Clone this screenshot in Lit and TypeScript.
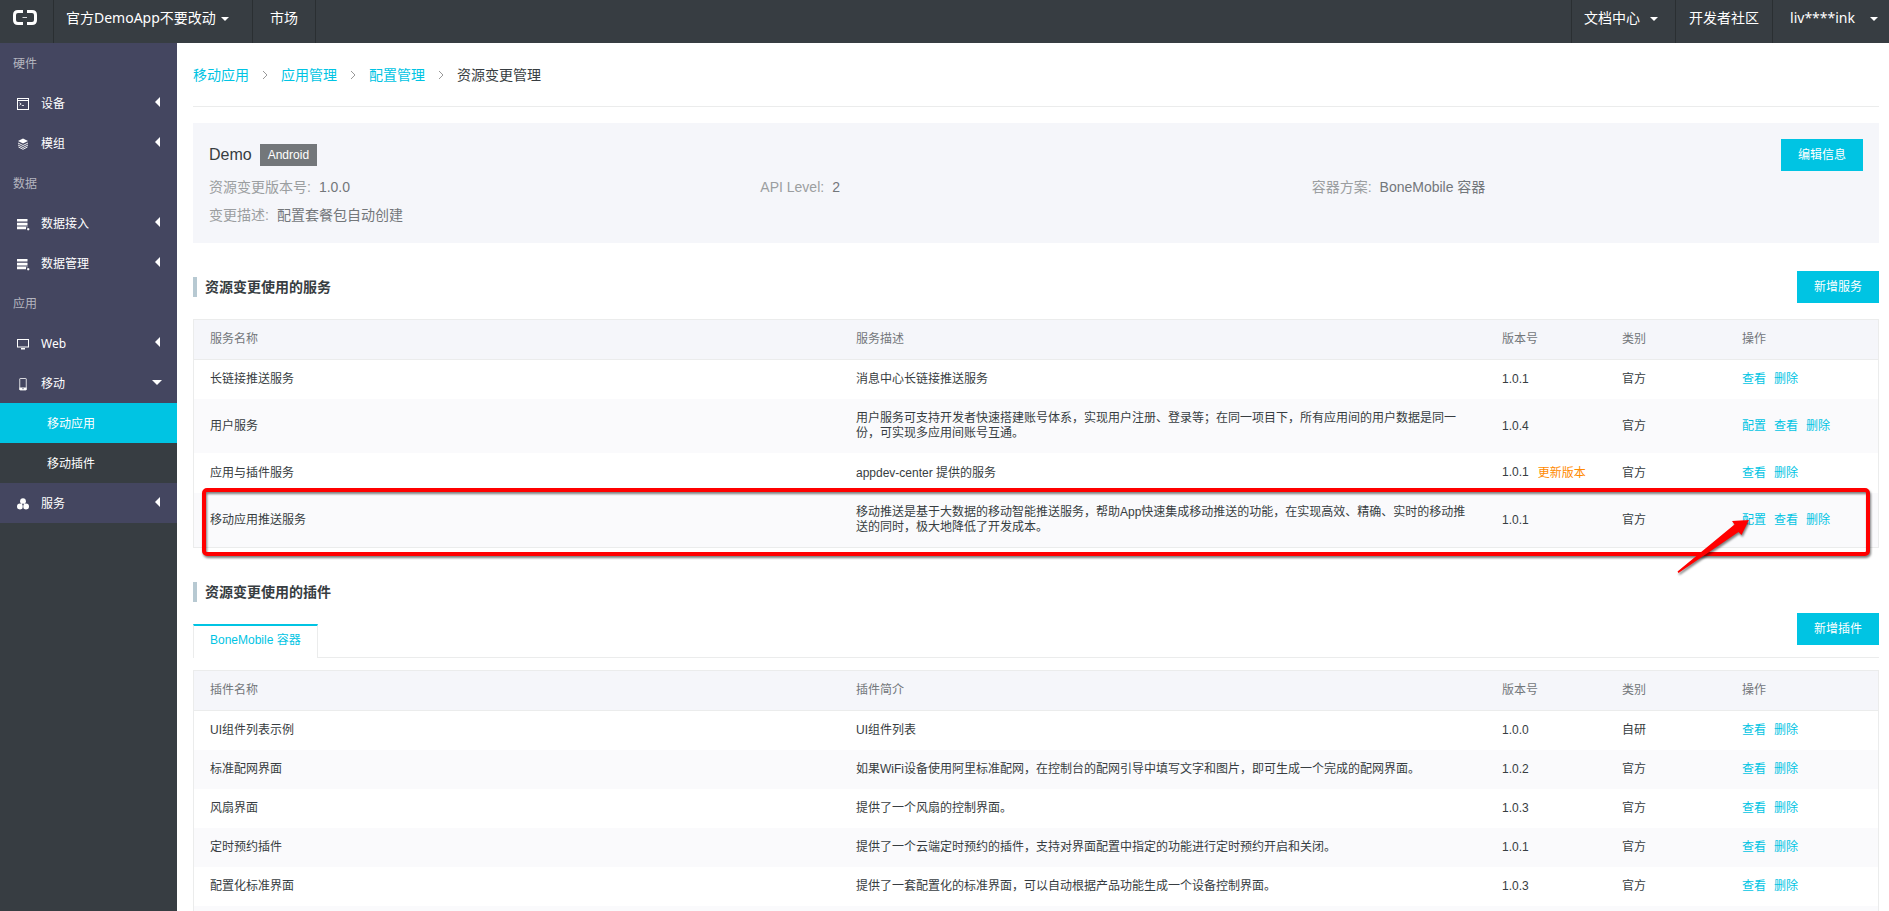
import { LitElement, html, css, svg, nothing } from "lit";
import { customElement } from "lit/decorators.js";
import { classMap } from "lit/directives/class-map.js";

interface NavEntry {
  label: string;
  icon?: string;
  open?: boolean;
  children?: { label: string; active?: boolean }[];
}

interface Row {
  name: string;
  desc: string;
  version: string;
  kind: string;
  actions: string[];
  upgrade?: boolean;
}

const ICONS: Record<string, unknown> = {
  device: svg`<rect x="0.5" y="0.5" width="11" height="11" fill="none" stroke="#fff"/><path d="M0 2.5H12" stroke="#fff"/><path d="M2.5 4.8L4.2 6L2.5 7.2M4.8 7.5H7" fill="none" stroke="#fff" stroke-width=".8"/>`,
  module: svg`<path d="M6 .5L11 3L6 5.5L1 3Z" fill="#fff"/><path d="M1 5L6 7.5L11 5M1 7L6 9.5L11 7M1.5 9L6 11.3L10.5 9" fill="none" stroke="#fff" stroke-width=".9"/>`,
  data: svg`<path d="M0 1H10.5V3.6H0ZM0 4.8H10.5V7.4H0ZM0 8.6H9V11.2H0Z" fill="#fff"/><path d="M10 8V9.5M10.5 10.5H12V12H10.5Z" stroke="#fff" stroke-width=".6" fill="#fff"/>`,
  web: svg`<rect x=".5" y="1.5" width="11" height="7.5" fill="none" stroke="#fff"/><path d="M4 10H8V11.5H4Z" fill="#fff"/>`,
  mobile: svg`<rect x="2.75" y=".5" width="6.5" height="11.5" rx=".5" fill="none" stroke="#fff" stroke-width=".8"/><path d="M2.5 9.5H9.5V12H2.5Z" fill="#fff"/><circle cx="6" cy="10.7" r=".6" fill="#444660"/>`,
  service: svg`<circle cx="6" cy="3.2" r="2.9" fill="#fff"/><circle cx="3" cy="8.4" r="3" fill="#fff"/><circle cx="9" cy="8.4" r="3" fill="#fff"/><path d="M6 5V11" stroke="#444660" stroke-width=".6"/>`,
};

const NAV: NavEntry[] = [
  { label: "硬件" },
  { label: "设备", icon: "device" },
  { label: "模组", icon: "module" },
  { label: "数据" },
  { label: "数据接入", icon: "data" },
  { label: "数据管理", icon: "data" },
  { label: "应用" },
  { label: "Web", icon: "web" },
  {
    label: "移动",
    icon: "mobile",
    open: true,
    children: [{ label: "移动应用", active: true }, { label: "移动插件" }],
  },
  { label: "服务", icon: "service" },
];

const SERVICES: Row[] = [
  { name: "长链接推送服务", desc: "消息中心长链接推送服务", version: "1.0.1", kind: "官方", actions: ["查看", "删除"] },
  {
    name: "用户服务",
    desc: "用户服务可支持开发者快速搭建账号体系，实现用户注册、登录等；在同一项目下，所有应用间的用户数据是同一份，可实现多应用间账号互通。",
    version: "1.0.4",
    kind: "官方",
    actions: ["配置", "查看", "删除"],
  },
  { name: "应用与插件服务", desc: "appdev-center 提供的服务", version: "1.0.1", kind: "官方", actions: ["查看", "删除"], upgrade: true },
  {
    name: "移动应用推送服务",
    desc: "移动推送是基于大数据的移动智能推送服务，帮助App快速集成移动推送的功能，在实现高效、精确、实时的移动推送的同时，极大地降低了开发成本。",
    version: "1.0.1",
    kind: "官方",
    actions: ["配置", "查看", "删除"],
  },
];

const PLUGINS: Row[] = [
  { name: "UI组件列表示例", desc: "UI组件列表", version: "1.0.0", kind: "自研", actions: ["查看", "删除"] },
  { name: "标准配网界面", desc: "如果WiFi设备使用阿里标准配网，在控制台的配网引导中填写文字和图片，即可生成一个完成的配网界面。", version: "1.0.2", kind: "官方", actions: ["查看", "删除"] },
  { name: "风扇界面", desc: "提供了一个风扇的控制界面。", version: "1.0.3", kind: "官方", actions: ["查看", "删除"] },
  { name: "定时预约插件", desc: "提供了一个云端定时预约的插件，支持对界面配置中指定的功能进行定时预约开启和关闭。", version: "1.0.1", kind: "官方", actions: ["查看", "删除"] },
  { name: "配置化标准界面", desc: "提供了一套配置化的标准界面，可以自动根据产品功能生成一个设备控制界面。", version: "1.0.3", kind: "官方", actions: ["查看", "删除"] },
  { name: "", desc: "", version: "", kind: "", actions: [] },
];

@customElement("top-bar")
export class TopBar extends LitElement {
  static styles = css`
    :host {
      display: flex;
      height: 43px;
      background: #373d42;
      color: #fff;
      font: 14px/36px "Noto Sans", "Noto Sans CJK SC", sans-serif;
    }
    a, button {
      display: flex;
      align-items: flex-start;
      box-sizing: border-box;
      height: 43px;
      margin: 0;
      border: 0;
      border-right: 1px solid #2a2f32;
      background: none;
      color: inherit;
      font: inherit;
      text-decoration: none;
      white-space: nowrap;
    }
    .logo { width: 54px; padding: 10px 0 0 13px; }
    .project { width: 199px; padding: 0 0 0 12px; gap: 5px; }
    .market { padding: 0 17px; }
    .right { display: flex; margin-left: auto; }
    .right > * { border-right: 0; border-left: 1px solid #2a2f32; padding: 0 13px; }
    .right .docs { gap: 10px; padding: 0 17px 0 12px; }
    .right .user { gap: 15px; padding: 0 11px 0 17px; }
    .caret {
      margin-top: 17px;
      border: 4px solid transparent;
      border-top-color: #fff;
      border-bottom: 0;
    }
  `;
  render() {
    return html`
      <a class="logo" href="#" aria-label="Home">
        <svg width="24" height="15" viewBox="0 0 24 15">
          <path d="M10 1.5H5Q1.5 1.5 1.5 5V10Q1.5 13.5 5 13.5H10M14 1.5H19Q22.5 1.5 22.5 5V10Q22.5 13.5 19 13.5H14" fill="none" stroke="#fff" stroke-width="3"/>
          <path d="M9.5 7.5H14" stroke="#fff" stroke-opacity=".8"/>
        </svg>
      </a>
      <button class="project">官方DemoApp不要改动<span class="caret"></span></button>
      <a class="market" href="#">市场</a>
      <div class="right">
        <button class="docs">文档中心<span class="caret"></span></button>
        <a href="#">开发者社区</a>
        <button class="user">liv****ink<span class="caret"></span></button>
      </div>
    `;
  }
}

@customElement("side-nav")
export class SideNav extends LitElement {
  static styles = css`
    :host {
      display: block;
      width: 177px;
      flex: none;
      background: #373d42;
      color: #fff;
      font: 12px/38px "Noto Sans", "Noto Sans CJK SC", sans-serif;
    }
    .group { padding: 2px 0 0 13px; background: #444660; color: #b4b5bf; }
    .item {
      display: flex;
      align-items: center;
      box-sizing: border-box;
      width: 100%;
      height: 40px;
      padding: 2px 17px 0;
      border: 0;
      background: #444660;
      color: inherit;
      font: inherit;
      text-align: left;
    }
    .item svg { margin-right: 12px; }
    .item .arrow { margin: 0 0 4px auto; }
    .item .arrow.down { margin-right: -2px; }
    .sub { display: block; padding: 2px 0 0 47px; color: inherit; text-decoration: none; }
    .sub.active { background: #00c4e3; }
  `;
  render() {
    return NAV.map((n) =>
      !n.icon
        ? html`<div class="group">${n.label}</div>`
        : html`
            <button class="item" aria-expanded=${n.open ? "true" : "false"}>
              <svg width="12" height="12" viewBox="0 0 12 12" overflow="visible">${ICONS[n.icon]}</svg>
              ${n.label}
              ${n.open
                ? html`<svg class="arrow down" width="10" height="5" viewBox="0 0 10 5"><path d="M0 0H10L5 5Z" fill="#fff"/></svg>`
                : html`<svg class="arrow" width="5" height="10" viewBox="0 0 5 10"><path d="M5 0V10L0 5Z" fill="#fff"/></svg>`}
            </button>
            ${n.children?.map((c) => html`<a class=${classMap({ sub: true, active: !!c.active })} href="#">${c.label}</a>`) ?? nothing}
          `
    );
  }
}

@customElement("data-grid")
export class DataGrid extends LitElement {
  static properties = { heads: { attribute: false }, rows: { attribute: false } };
  declare heads: string[];
  declare rows: Row[];
  static styles = css`
    :host { display: block; }
    table {
      width: 100%;
      table-layout: fixed;
      border-collapse: separate;
      border-spacing: 0;
      border: 1px solid #ebecec;
      box-sizing: border-box;
      font-size: 12px;
      line-height: 15px;
      color: #373d41;
    }
    th, td { height: 15px; padding: 12px 16px; text-align: left; font-weight: 400; }
    th { background: #f5f6fa; color: #73777a; border-bottom: 1px solid #ebecec; }
    tbody tr:nth-child(even) { background: #fafafc; }
    .short { width: 88px; }
    .ops { width: 120px; }
    .links { display: flex; gap: 8px; }
    .version { display: flex; gap: 9px; white-space: nowrap; }
    a { color: #00c4e3; text-decoration: none; }
    .upgrade { color: #ff8a00; line-height: 16px; }
  `;
  render() {
    return html`
      <table>
        <thead>
          <tr>
            <th>${this.heads[0]}</th>
            <th>${this.heads[1]}</th>
            <th class="short">版本号</th>
            <th class="short">类别</th>
            <th class="ops">操作</th>
          </tr>
        </thead>
        <tbody>
          ${this.rows.map(
            (r) => html`<tr>
              <td>${r.name}</td>
              <td>${r.desc}</td>
              <td><div class="version">${r.version}${r.upgrade ? html`<a class="upgrade" href="#">更新版本</a>` : nothing}</div></td>
              <td>${r.kind}</td>
              <td><div class="links">${r.actions.map((a) => html`<a href="#">${a}</a>`)}</div></td>
            </tr>`
          )}
        </tbody>
      </table>
    `;
  }
}

@customElement("app-root")
export class AppRoot extends LitElement {
  static styles = css`
    :host {
      display: flex;
      flex-direction: column;
      height: 100vh;
      overflow: hidden;
      background: #fff;
      color: #373d41;
      font: 14px/20px "Liberation Sans", "Noto Sans CJK SC", sans-serif;
    }
    top-bar { flex: none; }
    .body { display: flex; flex: 1; min-height: 0; }
    main { flex: 1; min-width: 0; padding: 0 10px 0 16px; overflow: hidden; }
    .crumbs {
      display: flex;
      align-items: center;
      gap: 14px;
      height: 63px;
      border-bottom: 1px solid #ebecec;
    }
    .crumbs a { color: #00c4e3; text-decoration: none; }
    .info {
      display: flex;
      flex-direction: column;
      box-sizing: border-box;
      min-height: 120px;
      margin-top: 16px;
      padding: 16px;
      background: #f5f6fa;
    }
    .top { display: flex; align-items: center; justify-content: space-between; }
    .name { display: flex; align-items: center; gap: 8px; margin: 0; font-size: 16px; font-weight: 400; }
    .badge { padding: 0 8px; background: #73777a; color: #fff; font-size: 12px; line-height: 22px; }
    .fields { display: grid; grid-template-columns: repeat(3, 1fr); row-gap: 8px; margin: 6px 0 0; color: #73777a; }
    .fields div { display: flex; gap: 8px; }
    .fields dt { color: #9b9ea0; }
    .fields dd { margin: 0; }
    .primary {
      height: 32px;
      padding: 0 17px;
      border: 0;
      background: #00c4e3;
      color: #fff;
      font: 12px/32px "Liberation Sans", "Noto Sans CJK SC", sans-serif;
    }
    .heading { display: flex; align-items: center; justify-content: space-between; margin: 28px 0 16px; }
    h2 {
      margin: 0;
      padding-left: 8px;
      border-left: 4px solid #b7c9d2;
      font-size: 14px;
      line-height: 20px;
    }
    .marked { position: relative; }
    .mark {
      position: absolute;
      box-sizing: border-box;
      inset: 169px 9px auto;
      height: 68px;
      border: 4px solid #f00;
      border-radius: 5px;
      filter: drop-shadow(1px 2px 1px rgba(0, 0, 0, 0.5));
      pointer-events: none;
    }
    .pointer {
      position: absolute;
      top: 197px;
      right: 127px;
      filter: drop-shadow(1px 2px 1px rgba(0, 0, 0, 0.5));
      pointer-events: none;
    }
    .plugins { margin: 34px 0 12px; display: grid; grid-template-columns: 1fr auto; border-bottom: 1px solid #ebecec; }
    .plugins .left { display: flex; flex-direction: column; align-items: flex-start; gap: 22px; }
    .plugins .primary { align-self: end; margin-bottom: 12px; }
    .tab {
      height: 34px;
      margin-bottom: -1px;
      padding: 0 16px 4px;
      border: 1px solid #ebecec;
      border-top: 2px solid #00c4e3;
      border-bottom: 0;
      background: #fff;
      color: #00c4e3;
      font: 12px/28px "Liberation Sans", "Noto Sans CJK SC", sans-serif;
    }
  `;
  render() {
    const crumbs = ["移动应用", "应用管理", "配置管理"];
    return html`
      <top-bar></top-bar>
      <div class="body">
        <side-nav></side-nav>
        <main>
          <nav class="crumbs">
            ${crumbs.map(
              (c) => html`<a href="#">${c}</a>
                <svg width="4" height="8" viewBox="0 0 4 8" overflow="visible"><path d="M0 0L4 4L0 8" fill="none" stroke="#999"/></svg>`
            )}
            <span>资源变更管理</span>
          </nav>
          <section class="info">
            <div class="top">
              <h1 class="name">Demo <span class="badge">Android</span></h1>
              <button class="primary">编辑信息</button>
            </div>
            <dl class="fields">
              <div><dt>资源变更版本号:</dt><dd>1.0.0</dd></div>
              <div><dt>API Level:</dt><dd>2</dd></div>
              <div><dt>容器方案:</dt><dd>BoneMobile 容器</dd></div>
              <div><dt>变更描述:</dt><dd>配置套餐包自动创建</dd></div>
            </dl>
          </section>
          <div class="heading">
            <h2>资源变更使用的服务</h2>
            <button class="primary">新增服务</button>
          </div>
          <div class="marked">
            <data-grid .heads=${["服务名称", "服务描述"]} .rows=${SERVICES}></data-grid>
            <div class="mark"></div>
            <svg class="pointer" width="76" height="58" viewBox="0 0 76 58">
              <path d="M73 4L56 5L58.5 8.5L1.5 55.5L2.5 57L62.5 16L65.5 19Z" fill="#f00"/>
            </svg>
          </div>
          <section class="plugins">
            <div class="left">
              <h2>资源变更使用的插件</h2>
              <button class="tab">BoneMobile 容器</button>
            </div>
            <button class="primary">新增插件</button>
          </section>
          <data-grid .heads=${["插件名称", "插件简介"]} .rows=${PLUGINS}></data-grid>
        </main>
      </div>
    `;
  }
}
